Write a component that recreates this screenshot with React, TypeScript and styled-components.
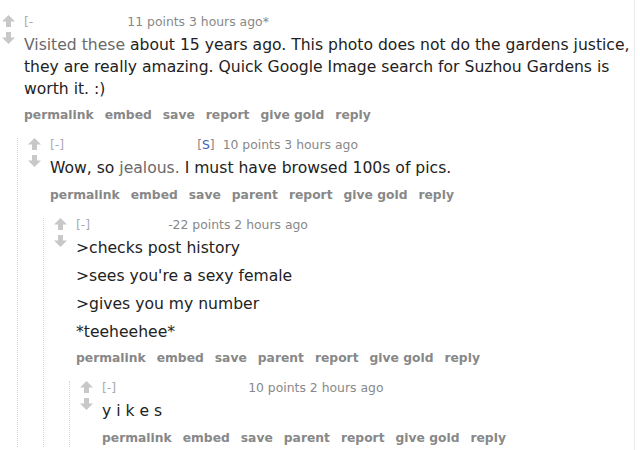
import styled, { createGlobalStyle } from "styled-components";
import type { ReactNode } from "react";

const GlobalStyle = createGlobalStyle`
  html, body {
    margin: 0;
    padding: 0;
    background: #ffffff;
  }
  body {
    font-family: "DejaVu Sans", Verdana, sans-serif;
  }
`;

const Thread = styled.main`
  width: 635px;
  min-height: 450px;
  box-sizing: border-box;
  border-right: 1px solid #ececec;
  padding-top: 15px;
  overflow: hidden;
`;

const CommentBox = styled.div<{ $nested: boolean }>`
  display: flex;
  align-items: flex-start;
  margin-left: ${(p) => (p.$nested ? "-7px" : "0")};
  margin-top: ${(p) => (p.$nested ? "14px" : "0")};
  padding-left: ${(p) => (p.$nested ? "10px" : "2px")};
  border-left: ${(p) => (p.$nested ? "1px dotted #d4d4e4" : "none")};
`;

const Votes = styled.div`
  width: 13px;
  flex-shrink: 0;
  display: flex;
  flex-direction: column;
  gap: 5px;
  margin-right: 9px;
`;

const Entry = styled.div`
  flex: 1;
  min-width: 0;
`;

const Tagline = styled.div`
  font-size: 12.4px;
  line-height: 14px;
  margin-bottom: 6px;
  color: #888888;
  white-space: nowrap;
`;

const Collapse = styled.span`
  color: #a9a9b4;
`;

const Author = styled.span<{ $width: number }>`
  display: inline-block;
  width: ${(p) => p.$width}px;
`;

const Flag = styled.span`
  margin-right: 4px;
`;

const Submitter = styled.span`
  color: #3b62b8;
`;

const Faded = styled.span`
  color: #6a6a6a;
`;

const Body = styled.div`
  font-size: 15.6px;
  line-height: 21.8px;
  color: #222222;
  padding-right: 2px;
  p {
    margin: 0 0 6px 0;
  }
`;

const Buttons = styled.ul`
  list-style: none;
  margin: 1px 0 0 0;
  padding: 0;
  display: flex;
  gap: 11px;
  font-size: 12.3px;
  line-height: 18px;
  font-weight: bold;
  color: #888888;
  white-space: nowrap;
`;

type CommentData = {
  id: number;
  collapse: string;
  authorWidth: number;
  submitter?: boolean;
  tagline: string;
  body: ReactNode[];
  buttons: string[];
  children?: CommentData[];
};

const childButtons = ["permalink", "embed", "save", "parent", "report", "give gold", "reply"];

const thread: CommentData = {
  id: 1,
  collapse: "[-",
  authorWidth: 94,
  tagline: "11 points 3 hours ago*",
  body: [
    <>
      <Faded>Visited these</Faded> about 15 years ago. This photo does not do the gardens
      justice, they are really amazing. Quick Google Image search for Suzhou Gardens is worth
      it. :)
    </>,
  ],
  buttons: ["permalink", "embed", "save", "report", "give gold", "reply"],
  children: [
    {
      id: 2,
      collapse: "[-]",
      authorWidth: 133,
      submitter: true,
      tagline: "10 points 3 hours ago",
      body: [
        <>
          Wow, so <Faded>jealous.</Faded> I must have browsed 100s of pics.
        </>,
      ],
      buttons: childButtons,
      children: [
        {
          id: 3,
          collapse: "[-]",
          authorWidth: 78,
          tagline: "-22 points 2 hours ago",
          body: [
            ">checks post history",
            ">sees you're a sexy female",
            ">gives you my number",
            "*teeheehee*",
          ],
          buttons: childButtons,
          children: [
            {
              id: 4,
              collapse: "[-]",
              authorWidth: 132,
              tagline: "10 points 2 hours ago",
              body: ["y i k e s"],
              buttons: childButtons,
            },
          ],
        },
      ],
    },
  ],
};

const Arrow = ({ down }: { down?: boolean }) => (
  <svg width="13" height="12" viewBox="0 0 13 12">
    <path
      d="M6.5 0 L13 6.5 L9 6.5 L9 12 L4 12 L4 6.5 L0 6.5 Z"
      fill="#c8c8c8"
      transform={down ? "rotate(180 6.5 6)" : undefined}
    />
  </svg>
);

const Comment = ({ data, nested }: { data: CommentData; nested: boolean }) => (
  <CommentBox $nested={nested}>
    <Votes>
      <Arrow />
      <Arrow down />
    </Votes>
    <Entry>
      <Tagline>
        <Collapse>{data.collapse}</Collapse>
        <Author $width={data.authorWidth} />
        {data.submitter && (
          <Flag>
            [<Submitter>S</Submitter>]
          </Flag>
        )}
        {data.submitter && " "}
        {data.tagline}
      </Tagline>
      <Body>
        {data.body.map((p, i) => (
          <p key={i}>{p}</p>
        ))}
      </Body>
      <Buttons>
        {data.buttons.map((b) => (
          <li key={b}>{b}</li>
        ))}
      </Buttons>
      {data.children?.map((c) => (
        <Comment key={c.id} data={c} nested />
      ))}
    </Entry>
  </CommentBox>
);

const App = () => {
  return (
    <>
      <GlobalStyle />
      <Thread>
        <Comment data={thread} nested={false} />
      </Thread>
    </>
  );
};
export default App;
